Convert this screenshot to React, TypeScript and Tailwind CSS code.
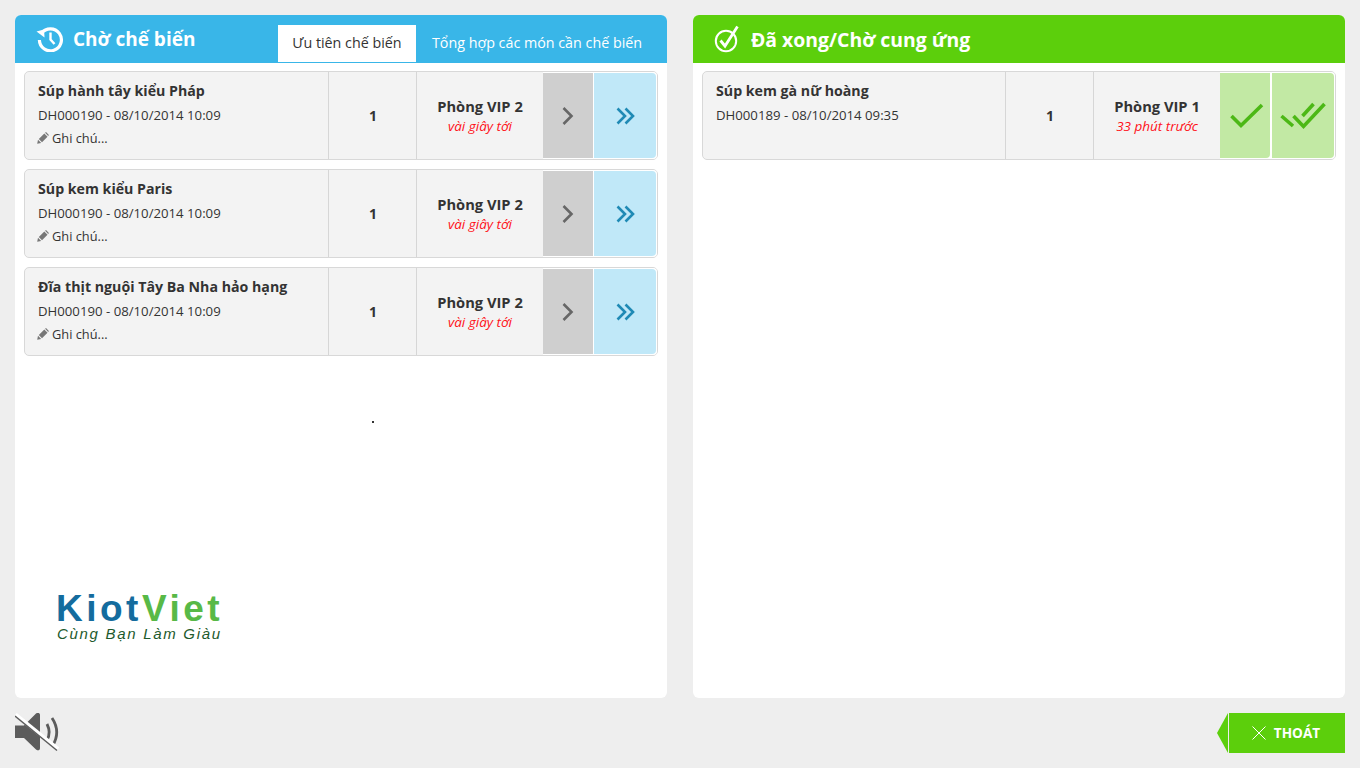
import React from 'react';

const font = { fontFamily: '"Open Sans", "Liberation Sans", sans-serif' };
const logoFont = { fontFamily: '"Liberation Sans", sans-serif' };

interface Order {
  name: string;
  code: string;
  qty: number;
  room: string;
  time: string;
  note?: boolean;
}

const waiting: Order[] = [
  { name: 'Súp hành tây kiểu Pháp', code: 'DH000190 - 08/10/2014 10:09', qty: 1, room: 'Phòng VIP 2', time: 'vài giây tới', note: true },
  { name: 'Súp kem kiểu Paris', code: 'DH000190 - 08/10/2014 10:09', qty: 1, room: 'Phòng VIP 2', time: 'vài giây tới', note: true },
  { name: 'Đĩa thịt nguội Tây Ba Nha hảo hạng', code: 'DH000190 - 08/10/2014 10:09', qty: 1, room: 'Phòng VIP 2', time: 'vài giây tới', note: true },
];

const done: Order[] = [
  { name: 'Súp kem gà nữ hoàng', code: 'DH000189 - 08/10/2014 09:35', qty: 1, room: 'Phòng VIP 1', time: '33 phút trước' },
];

function HistoryIcon() {
  return (
    <svg width="28" height="26" viewBox="0 0 28 26" fill="none" stroke="#fff" strokeWidth="3.2">
      <path d="M5.6 7.2A11 11 0 1 1 3.4 14" />
      <path d="M0.5 5.5 L8 3.5 L8.5 11.5 Z" fill="#fff" stroke="none" />
      <path d="M14.5 6.5V13.5L18.5 18" strokeWidth="2.4" />
    </svg>
  );
}

function CheckCircleIcon() {
  return (
    <svg width="26" height="28" viewBox="0 0 26 28" fill="none" stroke="#fff">
      <circle cx="12" cy="16" r="10.2" strokeWidth="2" />
      <path d="M6.5 15.5L11 21L23.5 1.5" strokeWidth="2.8" />
    </svg>
  );
}

function PencilIcon() {
  return (
    <svg width="12" height="12" viewBox="0 0 12 12" fill="#777">
      <path d="M0.2 11.8L1 7.8L4.2 11Z" />
      <path d="M1.8 7L7.3 1.5L10.5 4.7L5 10.2Z" />
      <path d="M8.1 0.8L9 0.1L11.9 3L11.2 3.9Z" />
    </svg>
  );
}

function OrderRow({ order, finished }: { order: Order; finished?: boolean }) {
  return (
    <div className="flex h-[89px] rounded-[5px] border border-[#d8d8d8] bg-[#f3f3f3] mb-[9px] text-[#333] overflow-hidden">
      <div className={`${finished ? 'w-[303px]' : 'w-[304px]'} shrink-0 border-r border-[#d6d6d6] pl-[13px] pt-[9px]`}>
        <div className="text-[14.2px] font-bold leading-[20px]">{order.name}</div>
        <div className="text-[13.2px] leading-[18px] mt-[5px]">{order.code}</div>
        {order.note && (
          <div className="flex items-center gap-[3px] -ml-px text-[12.8px] leading-[18px] mt-[5px]">
            <PencilIcon />
            <span>Ghi chú...</span>
          </div>
        )}
      </div>
      <div className="w-[88px] shrink-0 border-r border-[#d6d6d6] flex items-center justify-center text-[14px] font-bold pl-px">
        {order.qty}
      </div>
      <div className="w-[126px] shrink-0 flex flex-col items-center pt-[24px]">
        <div className="text-[14.7px] font-bold leading-[20px]">{order.room}</div>
        <div className="text-[13.5px] italic leading-[19px] mt-px text-[#ff1018]">{order.time}</div>
      </div>
      {finished ? (
        <div className="flex gap-[2px] flex-1 p-px pl-0 bg-white">
          <div className="w-[50px] bg-[#c2e9a4] rounded-br-[4px] flex items-center justify-center pl-[3px]">
            <svg width="34" height="26" viewBox="0 0 34 26" fill="none" stroke="#4cb816" strokeWidth="3.6">
              <path d="M1.5 13L11 22.5L32 2" />
            </svg>
          </div>
          <div className="flex-1 bg-[#c2e9a4] rounded-r-[4px] flex items-center justify-center">
            <svg width="46" height="28" viewBox="0 0 46 28" fill="none" stroke="#4cb816" strokeWidth="3.6">
              <path d="M1.5 14L13 24" />
              <path d="M13.5 14L23.5 24.5L44.5 2" />
              <path d="M22.5 14L33.5 2" />
            </svg>
          </div>
        </div>
      ) : (
        <div className="flex gap-px flex-1 p-px pl-0 bg-white">
          <div className="w-[50px] bg-[#cfcfcf] flex items-center justify-center">
            <svg width="12" height="20" viewBox="0 0 12 20" fill="none" stroke="#666" strokeWidth="2.6">
              <path d="M1.5 2L9.5 10L1.5 18" />
            </svg>
          </div>
          <div className="flex-1 bg-[#c0e8f8] rounded-r-[4px] flex items-center justify-center">
            <svg width="19" height="18" viewBox="0 0 19 18" fill="none" stroke="#1f8ab5" strokeWidth="2.6">
              <path d="M1.5 1.5L9 9L1.5 16.5" />
              <path d="M9.5 1.5L17 9L9.5 16.5" />
            </svg>
          </div>
        </div>
      )}
    </div>
  );
}

export default function App() {
  return (
    <div className="h-[768px] w-[1360px] overflow-hidden bg-[#eeeeee] px-[15px] pt-[15px] flex flex-col" style={font}>
      <div className="flex justify-between h-[683px]">
        <section className="relative w-[652px] bg-white rounded-[6px] flex flex-col overflow-hidden">
          <header className="h-[48px] bg-[#39b6e8] flex items-center justify-between pl-[21px] pr-[9px]">
            <div className="flex items-center gap-[9px] text-white">
              <HistoryIcon />
              <span className="text-[19px] font-bold pt-[1px]">Chờ chế biến</span>
            </div>
            <div className="flex self-start mt-[10px] text-[14.3px]">
              <div className="w-[138px] h-[37px] bg-white text-[#333] flex items-center justify-center pb-[1px]">Ưu tiên chế biến</div>
              <div className="w-[242px] h-[37px] text-white flex items-center justify-center pb-[1px]">Tổng hợp các món cần chế biến</div>
            </div>
          </header>
          <div className="px-[9px] pt-[8px] flex-1 flex flex-col">
            {waiting.map((o, i) => (
              <OrderRow key={i} order={o} />
            ))}
            <div className="mt-auto mb-[56px] ml-[32px] w-[170px]">
              <div className="text-[37px] leading-[34px] tracking-[3.5px] font-bold whitespace-nowrap" style={logoFont}>
                <span className="text-[#146c9e]">Kiot</span>
                <span className="text-[#58b947]">Viet</span>
              </div>
              <div className="text-[15px] italic leading-[16px] tracking-[1.7px] text-[#1d5a2c] whitespace-nowrap ml-px" style={logoFont}>
                Cùng Bạn Làm Giàu
              </div>
            </div>
          </div>
          {/* stray loading dot in the reference */}
          <div className="absolute left-[357px] top-[406px] w-[2px] h-[2px] bg-[#333]" />
        </section>

        <section className="w-[652px] bg-white rounded-[6px] flex flex-col overflow-hidden">
          <header className="h-[48px] bg-[#5ccf0c] flex items-center pl-[21px] gap-[11px] text-white">
            <CheckCircleIcon />
            <span className="text-[19.4px] font-bold pt-[1px]">Đã xong/Chờ cung ứng</span>
          </header>
          <div className="px-[9px] pt-[8px]">
            {done.map((o, i) => (
              <OrderRow key={i} order={o} finished />
            ))}
          </div>
        </section>
      </div>

      <footer className="flex justify-between items-start pt-[14px]">
        <svg width="44" height="40" viewBox="0 0 44 40" fill="none">
          <path d="M0 13.5H9L21 1.5C23 0.5 25 1 25 3V36C25 38.5 23 39 21 37.5L9 26H0Z" fill="#5c5c5c" />
          <path d="M32 12C35 18 35 23 32 28" stroke="#5c5c5c" strokeWidth="2.8" />
          <path d="M37 6C43 15 43 25 37.5 34" stroke="#5c5c5c" strokeWidth="2.8" />
          <path d="M0.5 2.5L43 37" stroke="#ffffff" strokeWidth="4" />
          <path d="M0 4L42 38.5" stroke="#5c5c5c" strokeWidth="1.4" />
        </svg>
        <div className="flex items-stretch h-[40px] mt-px">
          <div className="w-0 h-0 self-center border-y-[20px] border-y-transparent border-r-[11px] border-r-[#5ccf0c]" />
          <div className="w-px" />
          <div className="w-[116px] bg-[#5ccf0c] flex items-center justify-center gap-[8px] pr-[2px] text-white text-[13.6px] font-bold">
            <svg width="14" height="14" viewBox="0 0 14 14" stroke="#fff" strokeWidth="1">
              <path d="M0.5 0.5L13.5 13.5M13.5 0.5L0.5 13.5" />
            </svg>
            <span>THOÁT</span>
          </div>
        </div>
      </footer>
    </div>
  );
}
